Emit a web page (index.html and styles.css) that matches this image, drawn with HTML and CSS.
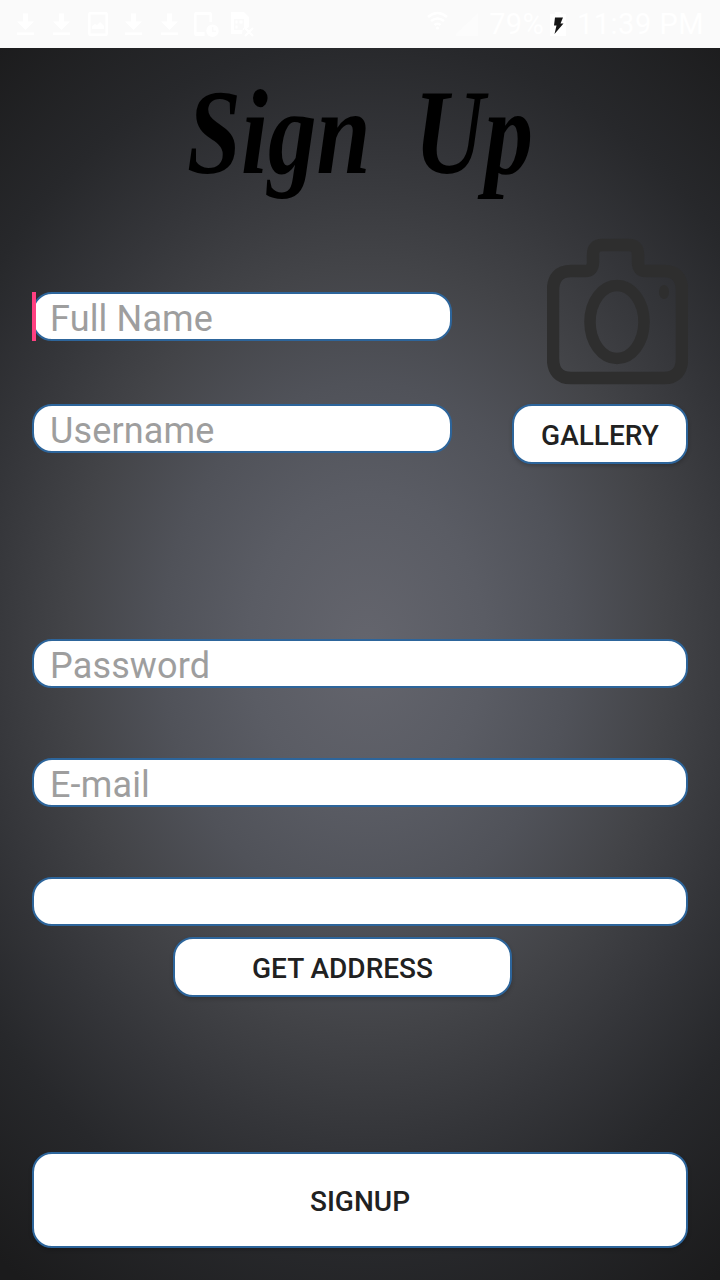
FILE: index.html
```
<!DOCTYPE html>
<html lang="en">
<head>
<meta charset="utf-8">
<meta name="viewport" content="width=device-width">
<title>Sign Up</title>
<link rel="stylesheet" href="styles.css">
</head>
<body>
<div class="screen">
  <header class="status">
    <svg class="tray" width="260" height="48" viewBox="0 0 260 48" aria-hidden="true">
      <defs>
        <path id="dl" d="M6 0h5v8h6l-8.500 8.500L0 8h6zM0 19h17v2.500H0z"/>
      </defs>
      <g fill="#fff">
        <use href="#dl" x="17" y="13.500"/>
        <use href="#dl" x="53" y="13.500"/>
        <use href="#dl" x="125" y="13.500"/>
        <use href="#dl" x="161" y="13.500"/>
        <path fill-rule="evenodd" d="M90 12h16q2 0 2 2v20q0 2-2 2H90q-2 0-2-2V14q0-2 2-2zm.5 2.500v19h15v-19zM92 29v-3l3-2 2 1 3-3 4 4v3z"/>
        <path fill-rule="evenodd" d="M196 12h14q2 0 2 2v8h-2.500V15h-13v17h8v4H196q-2 0-2-2V14q0-2 2-2z"/>
        <path fill-rule="evenodd" d="M212.500 24.500a6 6 0 1 1 0 12.500 6 6 0 0 1 0-12.500zM212 27v5h4v-1.500h-2.500V27z"/>
        <path fill-rule="evenodd" d="M231 12h13l5 5v10l-3 2-3-1-1 6h-11zM234 19v11h10V19zM235.500 20.500h2v3h-2zm4 0h3v3h-3zm-4 5h2v3h-2z"/>
      </g>
      <path d="m245 28 8 8m0-8-8 8" stroke="#fff" stroke-width="2"/>
    </svg>
    <div class="system">
      <svg width="56" height="28" viewBox="0 0 56 28" aria-hidden="true">
        <g fill="none" stroke="#fff" stroke-width="2.500">
          <path d="M2 7q9.500-8 19 0M5 11q6.500-5 13 0M8.500 15q3-2.500 6 0"/>
        </g>
        <circle cx="11.500" cy="18" r="1.500" fill="#fff"/>
        <path d="M30 26V24L52 3v23z" fill="#fcfcfc"/>
      </svg>
      <span class="percent">79%</span>
      <svg class="battery" width="16" height="24" viewBox="0 0 16 24" aria-hidden="true">
        <path d="M0 2h5V0h6v2h5v22H0z" fill="#fff"/>
        <path d="M5 5.500h8l-2.500 6h3L4.500 22l2-8.500H4z" fill="#161616"/>
      </svg>
      <span class="clock">11:39 PM</span>
    </div>
  </header>

  <main class="signup">
    <h1 class="title">
      <svg width="370" height="140" viewBox="0 0 370 140">
        <text x="12" y="98" textLength="346" lengthAdjust="spacingAndGlyphs">Sign Up</text>
      </svg>
    </h1>

    <form class="form">
      <div class="profile">
        <div class="names">
          <div class="field focused"><input type="text" placeholder="Full Name" aria-label="Full Name"></div>
          <div class="field"><input type="text" placeholder="Username" aria-label="Username"></div>
        </div>
        <div class="photo">
          <svg class="camera" width="141" height="148" viewBox="0 0 141 148" aria-hidden="true">
            <g fill="none" stroke="#2e2e2e">
              <path stroke-width="12.500" stroke-linejoin="round" d="M24 34h14q8 0 8-9v-7q0-10 9-10h27q9 0 9 10v7q0 9 8 9h18q18 0 18 20v67q0 20-18 20H24q-18 0-18-20V54q0-20 18-20z"/>
              <ellipse cx="70" cy="85" rx="27" ry="36.500" stroke-width="11.500"/>
            </g>
            <ellipse cx="117" cy="55" rx="5" ry="7" fill="#2e2e2e"/>
          </svg>
          <button type="button" class="button gallery">GALLERY</button>
        </div>
      </div>
      <div class="details">
        <div class="field"><input type="password" placeholder="Password" aria-label="Password"></div>
        <div class="field"><input type="text" placeholder="E-mail" aria-label="E-mail"></div>
        <div class="field"><input type="text" aria-label="Address"></div>
      </div>
      <button type="button" class="button address">GET ADDRESS</button>
      <button type="button" class="button submit">SIGNUP</button>
    </form>
  </main>
</div>
</body>
</html>
```
FILE: styles.css
```
* { box-sizing: border-box; }

body {
  margin: 0;
  font-family: Roboto, "Noto Sans", sans-serif;
}

.screen {
  width: 720px;
  height: 1280px;
  display: flex;
  flex-direction: column;
  overflow: hidden;
}

.status {
  height: 48px;
  flex: none;
  display: flex;
  justify-content: space-between;
  align-items: center;
  padding-right: 16px;
  background: #fafafa;
  color: #fff;
  font-size: 29px;
}

.tray { display: block; }

.system {
  display: flex;
  align-items: center;
}

.percent {
  margin-left: 7px;
  letter-spacing: 0.3px;
}

.clock { letter-spacing: 0.5px; }

.battery { margin: 0 11px 0 6px; }

.signup {
  flex: 1;
  display: flex;
  flex-direction: column;
  padding: 27px 32px 32px;
  background: radial-gradient(ellipse 540px 690px at 51% 48.500%, #64656d 0%, #5a5c64 22%, #505259 38%, #434448 55%, #343539 72%, #27282b 88%, #1b1b1c 112%);
}

.title {
  height: 140px;
  margin: 0;
  display: flex;
  justify-content: center;
}

.title svg { overflow: visible; }

.title text {
  font-family: "Liberation Serif", serif;
  font-style: italic;
  font-weight: bold;
  font-size: 120px;
  word-spacing: 24px;
  fill: #000;
}

.form {
  flex: 1;
  display: flex;
  flex-direction: column;
  padding-top: 22px;
}

.profile {
  display: flex;
  justify-content: space-between;
}

.names {
  width: 420px;
  display: flex;
  flex-direction: column;
  gap: 63px;
  padding-top: 55px;
}

.photo {
  display: flex;
  flex-direction: column;
  align-items: flex-end;
  gap: 19px;
}

.camera { display: block; }

.field {
  height: 49px;
  border: 2px solid #2d659b;
  border-radius: 20px;
  background: #fff;
  padding: 0 16px;
  position: relative;
}

.focused::before {
  content: "";
  position: absolute;
  left: -2px;
  top: -2px;
  width: 4px;
  height: 49px;
  background: #ff4081;
}

.field input {
  width: 100%;
  height: 49px;
  border: 0;
  padding: 1px 0 0;
  background: transparent;
  outline: 0;
  font-family: inherit;
  font-size: 36px;
  letter-spacing: 0.15px;
  color: #212121;
}

.field input::placeholder {
  color: #9e9e9e;
  opacity: 1;
}

.button {
  flex: none;
  height: 60px;
  padding: 3px 0 0;
  border: 2px solid #2d659b;
  border-radius: 20px;
  background: #fff;
  box-shadow: 0 2px 4px rgba(0, 0, 0, 0.2);
  font-family: inherit;
  font-weight: 500;
  font-size: 28px;
  color: #212121;
}

.gallery { width: 176px; }

.details {
  display: flex;
  flex-direction: column;
  gap: 70px;
  padding-top: 175px;
}

.address {
  width: 339px;
  margin: 11px 0 0 141px;
}

.submit {
  height: 96px;
  margin-top: auto;
}
```
